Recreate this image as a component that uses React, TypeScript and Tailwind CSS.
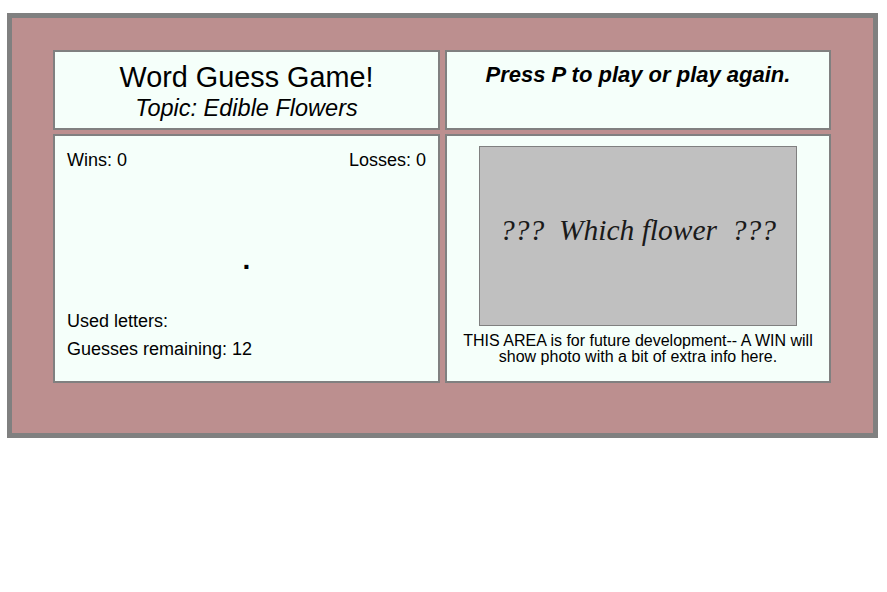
export default function App() {
  const sans = { fontFamily: '"Liberation Sans", Arial, sans-serif' };
  return (
    <div className="w-[887px] h-[592px] bg-white pt-[13px] pl-[7px]" style={sans}>
      <div className="w-[871px] h-[425px] border-[5px] border-[#808080] bg-[#bc8f8f] pt-[32px] pl-[41px]">
        <div className="w-[778px] flex flex-col gap-[4px]">
          <div className="flex gap-[5px] h-[80px]">
            <div className="w-[387px] border-2 border-[#808080] bg-[#f5fffa] text-center text-black pt-[8px]">
              <div className="text-[28.8px] leading-[34px]">Word Guess Game!</div>
              <div className="text-[23.5px] leading-[29px] italic">Topic: Edible Flowers</div>
            </div>
            <div className="w-[386px] border-2 border-[#808080] bg-[#f5fffa] text-center text-black pt-[10px]">
              <div className="text-[22px] leading-[26px] italic font-bold">Press P to play or play again.</div>
            </div>
          </div>
          <div className="flex gap-[5px] h-[249px]">
            <div className="w-[387px] border-2 border-[#808080] bg-[#f5fffa] text-black text-[18px] leading-[21px] pt-[14px] px-[12px] flex flex-col">
              <div className="flex justify-between">
                <span>Wins: 0</span>
                <span>Losses: 0</span>
              </div>
              <div className="h-[140px] flex items-center justify-center">
                <span className="text-[28px] leading-none font-bold mt-[38px]">.</span>
              </div>
              <div>Used letters:</div>
              <div className="mt-[7px]">Guesses remaining: 12</div>
            </div>
            <div className="w-[386px] border-2 border-[#808080] bg-[#f5fffa] text-black pt-[10px] flex flex-col items-center">
              <div className="w-[318px] h-[180px] border border-[#808080] bg-[#c0c0c0] flex items-center justify-center">
                <span
                  className="text-[29.5px] italic whitespace-pre text-[#1a1a1a] mt-[-12px]"
                  style={{ fontFamily: '"Liberation Serif", "DejaVu Serif", serif' }}
                >
                  {"???  Which flower  ???"}
                </span>
              </div>
              <div className="mt-[7px] text-[16px] leading-[16px] text-center">
                THIS AREA is for future development-- A WIN will
                <br />
                show photo with a bit of extra info here.
              </div>
            </div>
          </div>
        </div>
      </div>
    </div>
  );
}
